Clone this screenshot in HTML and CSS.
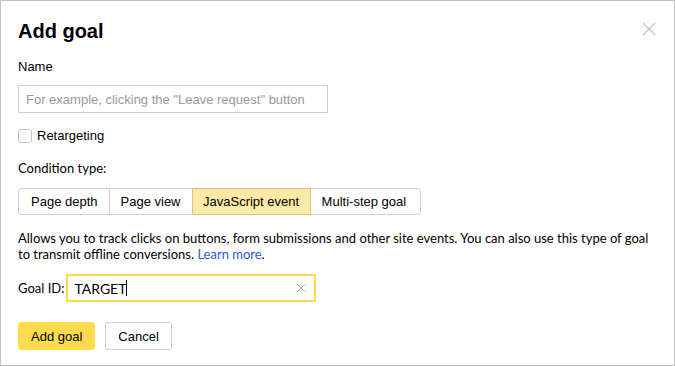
FILE: index.html
```html
<!DOCTYPE html>
<html lang="en">
<head>
    <meta charset="UTF-8">
    <title>Add goal</title>
    <link rel="stylesheet" href="styles.css">
</head>
<body>
    <div class="dialog">
        <button class="close" type="button" aria-label="Close">
            <svg width="14" height="14" viewBox="0 0 14 14"><path d="M1 1L13 13M13 1L1 13" stroke="#c4c4c4" stroke-width="1.4"/></svg>
        </button>
        <h1 class="title">Add goal</h1>

        <div class="label">Name</div>
        <input class="text-input name-input" type="text" placeholder="For example, clicking the &quot;Leave request&quot; button">

        <label class="check">
            <span class="check-box"></span>
            <span>Retargeting</span>
        </label>

        <div class="label cond-label">Condition type:</div>
        <div class="segments">
            <span class="seg">Page depth</span>
            <span class="seg">Page view</span>
            <span class="seg seg-on">JavaScript event</span>
            <span class="seg">Multi-step goal</span>
        </div>

        <p class="hint">Allows you to track clicks on buttons, form submissions and other site events. You can also use this type of goal to transmit offline conversions. <a href="#">Learn more</a>.</p>

        <div class="goal-row">
            <span class="goal-label">Goal ID:</span>
            <div class="goal-input">
                <span class="goal-value">TARGET</span><span class="caret"></span>
                <svg class="clear" width="10" height="10" viewBox="0 0 10 10"><path d="M1 1L9 9M9 1L1 9" stroke="#a8a8a8" stroke-width="1"/></svg>
            </div>
        </div>

        <div class="actions">
            <button class="btn btn-yellow" type="button">Add goal</button>
            <button class="btn" type="button">Cancel</button>
        </div>
    </div>
</body>
</html>
```
FILE: styles.css
```css
body {
    margin: 0;
    font-family: "Liberation Sans", Arial, sans-serif;
    font-size: 13px;
    color: #000;
}
.dialog {
    width: 675px;
    height: 366px;
    box-sizing: border-box;
    border: 1px solid #c2c2c2;
    padding: 18px 17px 0;
    position: relative;
    background: #fff;
}
.close {
    position: absolute;
    top: 21px;
    right: 18px;
    border: 0;
    padding: 0;
    background: none;
    width: 14px;
    height: 14px;
    display: block;
}
.close svg {
    display: block;
}
.title {
    margin: 0;
    font-size: 20px;
    line-height: 24px;
    font-weight: 700;
}
.label {
    margin-top: 16px;
    line-height: 16px;
}
.text-input {
    display: block;
    box-sizing: border-box;
    width: 310px;
    height: 28px;
    margin: 10px 0 0;
    border: 1px solid #d0d0d0;
    padding: 0 7px;
    font-family: inherit;
    font-size: 13px;
    outline: none;
}
.text-input::placeholder {
    color: #999;
}
.check {
    display: flex;
    align-items: center;
    gap: 5px;
    margin-top: 15px;
    line-height: 16px;
}
.check-box {
    width: 12px;
    height: 12px;
    border: 1px solid #c6c6c6;
    border-radius: 3px;
}
.cond-label {
    margin-top: 16px;
    font-family: Lato, sans-serif;
    font-size: 13px;
}
.segments {
    display: inline-flex;
    margin-top: 12px;
    border: 1px solid #d0d0d0;
    border-radius: 3px;
    height: 25px;
}
.seg {
    display: flex;
    align-items: center;
    padding: 0 11px;
    border-left: 1px solid #d0d0d0;
}
.seg:first-child {
    border-left: 0;
    padding-left: 12px;
}
.seg:last-child {
    padding-right: 14px;
}
.seg-on {
    background: #fee9a6;
    border: 1px solid #d8c384;
    margin: -1px 0;
    padding: 0 10.5px;
}
.seg-on + .seg {
    border-left: 0;
}
.hint {
    margin: 15px 0 0;
    line-height: 16px;
    font-family: Lato, sans-serif;
    font-size: 13px;
}
.hint a {
    color: #2e5bcc;
    text-decoration: none;
}
.goal-row {
    display: flex;
    align-items: center;
    gap: 2px;
    margin-top: 12px;
}
.goal-label {
    font-family: Lato, sans-serif;
    font-size: 13px;
}
.goal-input {
    box-sizing: border-box;
    width: 250px;
    height: 28px;
    border: 2px solid #ffd84d;
    display: flex;
    align-items: center;
    padding: 0 8px 0 6px;
}
.goal-value {
    font-family: Lato, sans-serif;
    font-size: 14px;
}
.caret {
    width: 1px;
    height: 16px;
    background: #000;
}
.clear {
    margin-left: auto;
}
.actions {
    display: flex;
    gap: 10px;
    margin-top: 20px;
}
.btn {
    height: 28px;
    padding: 0 12px;
    border: 1px solid #cfcfcf;
    border-radius: 3px;
    background: #fff;
    font-family: inherit;
    font-size: 13px;
    color: #000;
}
.btn-yellow {
    background: #ffdb4d;
    border-color: #ffdb4d;
}
```
